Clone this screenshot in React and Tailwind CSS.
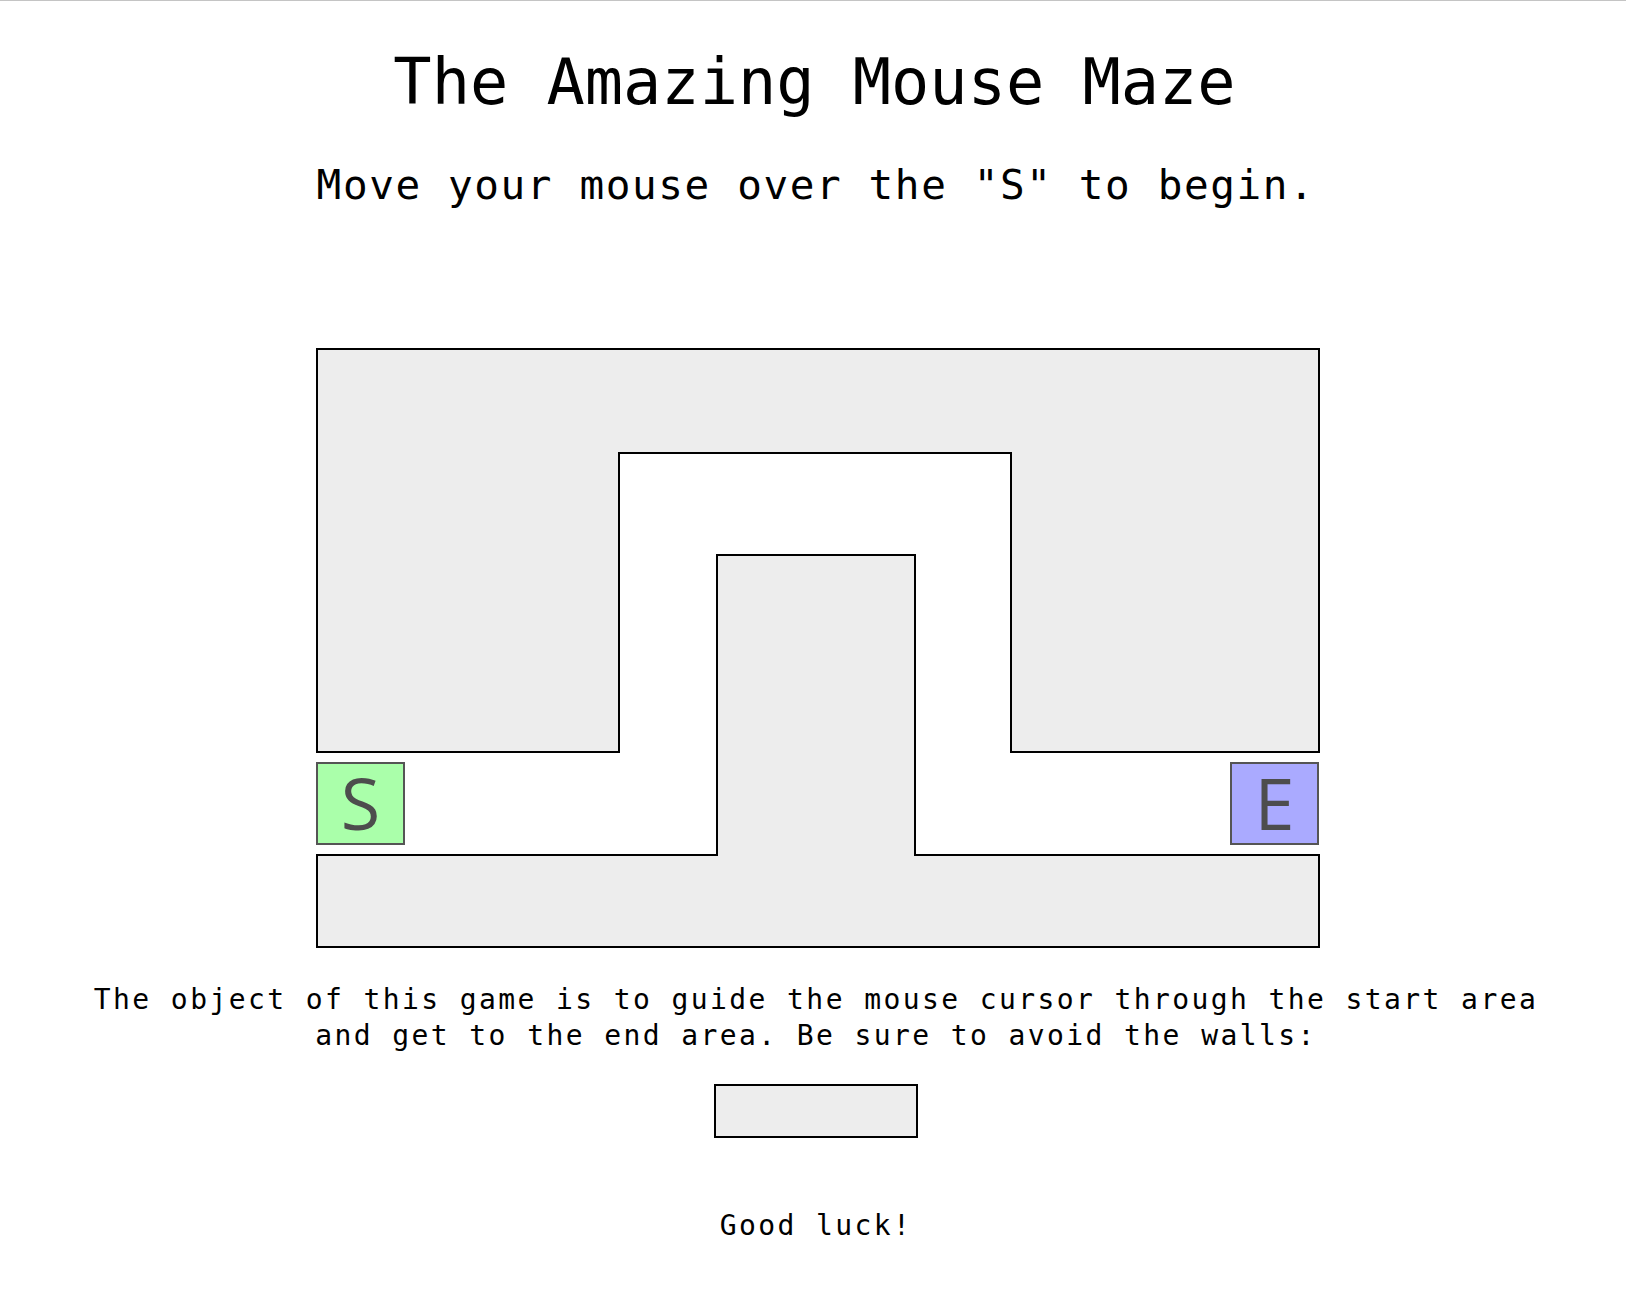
export default function App() {
  return (
    <div className="min-h-screen bg-white font-['DejaVu_Sans_Mono',monospace] text-black">
      <div className="h-px bg-[#c4c4c4]" />

      <h1 className="mt-[44px] pl-[3px] text-center text-[63.6px] leading-[74px] font-normal">
        The Amazing Mouse Maze
      </h1>
      <p className="mt-[42px] pl-[6px] text-center text-[41px] leading-[48px] tracking-[1.6px]">
        Move your mouse over the "S" to begin.
      </p>

      {/* maze */}
      <div className="mt-[139px] flex justify-center">
        <div className="relative ml-[10px] h-[600px] w-[1004px]">
          <svg
            width="1004"
            height="600"
            viewBox="0 0 1004 600"
            shapeRendering="crispEdges"
            xmlns="http://www.w3.org/2000/svg"
          >
            <polygon
              points="1,1 1003,1 1003,404 695,404 695,105 303,105 303,404 1,404"
              fill="#ededed"
              stroke="#000"
              strokeWidth="2"
            />
            <polygon
              points="401,207 599,207 599,507 1003,507 1003,599 1,599 1,507 401,507"
              fill="#ededed"
              stroke="#000"
              strokeWidth="2"
            />
          </svg>

          <div className="absolute left-0 top-[414px] flex h-[83px] w-[89px] items-center justify-center border-2 border-[#555] bg-[#aaffaa] pb-1 font-['Open_Sans',sans-serif] text-[72px] leading-none text-[#4d4d4d]">
            S
          </div>
          <div className="absolute left-[914px] top-[414px] flex h-[83px] w-[89px] items-center justify-center border-2 border-[#555] bg-[#aaaaff] pb-1 font-['Open_Sans',sans-serif] text-[72px] leading-none text-[#4d4d4d]">
            E
          </div>
        </div>
      </div>

      <p className="mt-[34px] pl-[6px] text-center text-[28px] leading-[36px] tracking-[2.4px]">
        The object of this game is to guide the mouse cursor through the start area
        <br />
        and get to the end area. Be sure to avoid the walls:
      </p>

      <div className="mt-[30px] flex justify-center">
        <div className="ml-[6px] h-[54px] w-[204px] border-2 border-black bg-[#ededed]" />
      </div>

      <p className="mt-[70px] pb-10 pl-[6px] text-center text-[28px] leading-[36px] tracking-[2.4px]">
        Good luck!
      </p>
    </div>
  );
}
